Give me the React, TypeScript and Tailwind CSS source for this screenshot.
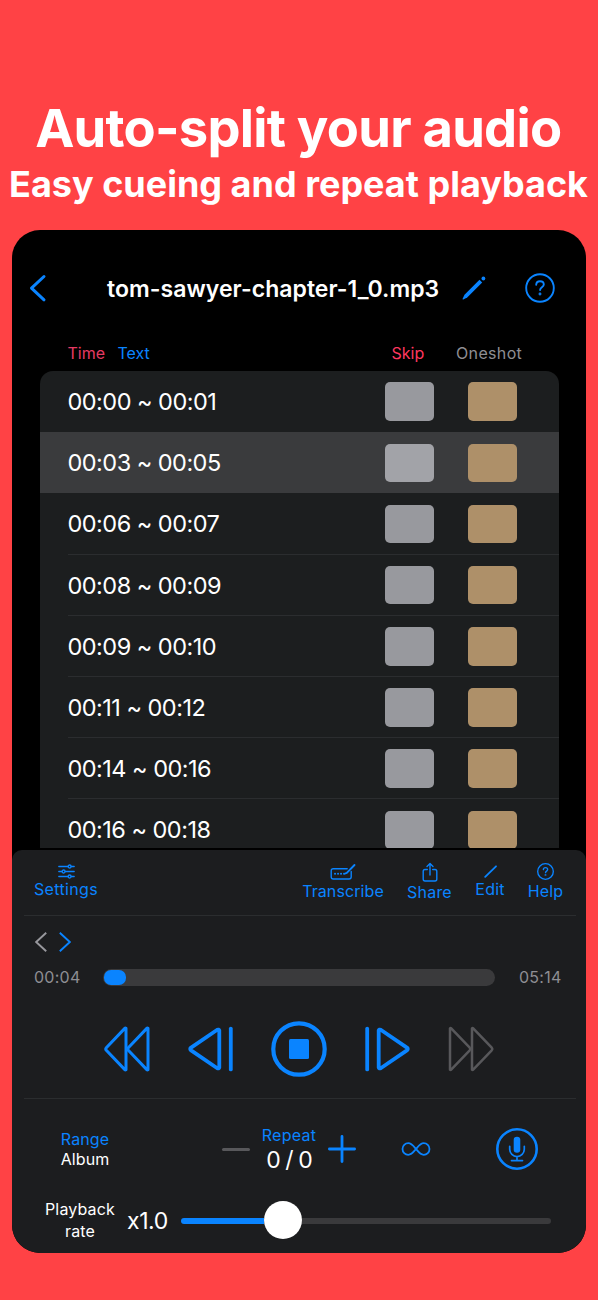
import { ReactNode } from "react";

const segments = [
  "00:00 ~ 00:01",
  "00:03 ~ 00:05",
  "00:06 ~ 00:07",
  "00:08 ~ 00:09",
  "00:09 ~ 00:10",
  "00:11 ~ 00:12",
  "00:14 ~ 00:16",
  "00:16 ~ 00:18",
];

const PencilIcon = ({ className }: { className?: string }) => (
  <svg viewBox="0 0 24 24" className={className} fill="currentColor">
    <path d="M17.500 3.700l2.700 2.700L5.200 21.400 1.300 23.400q-1 .2-.7-.7L2.500 18.700z" />
    <circle cx="21.400" cy="2.500" r="1.900" />
  </svg>
);

const EditIcon = () => (
  <svg
    viewBox="0 0 13 13"
    className="size-[13px]"
    stroke="currentColor"
    strokeWidth="1.800"
    strokeLinecap="round"
  >
    <path d="M1.200 11.900L12 1.300" />
  </svg>
);

const HelpIcon = ({
  className,
  strokeWidth,
}: {
  className?: string;
  strokeWidth: number;
}) => (
  <svg
    viewBox="0 0 30 30"
    className={className}
    fill="none"
    stroke="currentColor"
    strokeWidth={strokeWidth}
    strokeLinecap="round"
    strokeLinejoin="round"
  >
    <circle cx="15" cy="15" r="13.8" />
    <path d="M11.200 11.700c.1-2.200 1.600-3.500 3.800-3.500 2.200 0 3.800 1.300 3.800 3.300 0 2.700-3.700 2.900-3.700 5.500" />
    <circle cx="15" cy="21" r=".5" fill="currentColor" />
  </svg>
);

const SlidersIcon = () => (
  <svg
    viewBox="0 0 17 15"
    className="h-[15px] w-[17px]"
    fill="none"
    stroke="currentColor"
    strokeWidth="1.300"
    strokeLinecap="round"
  >
    <path d="M.8 2.500h9.200M13.200 2.500h3M.8 7.500h3.200M7.200 7.500h9M.8 12.500h9.200M13.200 12.500h3" />
    <circle cx="11.600" cy="2.500" r="1.500" />
    <circle cx="5.600" cy="7.500" r="1.500" />
    <circle cx="11.600" cy="12.500" r="1.500" />
  </svg>
);

const TranscribeIcon = () => (
  <svg
    viewBox="0 0 26 18"
    className="h-[18px] w-[26px]"
    fill="none"
    stroke="currentColor"
    strokeWidth="1.400"
    strokeLinecap="round"
    strokeLinejoin="round"
  >
    <path d="M17.200 5.700H3.200Q1.200 5.700 1.200 7.700v6Q1.200 16 3.200 16H19Q21.200 16 21.200 13.700V8.500" />
    <path d="M24.500 2l-7.700 7.800-1.600.7" strokeWidth="1.900" />
    <path
      d="M5 10.800h.1M8 10.800h.1M11 10.800h.1M14 10.800h.1"
      strokeWidth="1.900"
    />
  </svg>
);

const ShareIcon = () => (
  <svg
    viewBox="0 0 16 20"
    className="h-5 w-4"
    fill="none"
    stroke="currentColor"
    strokeWidth="1.400"
    strokeLinecap="round"
    strokeLinejoin="round"
  >
    <path d="M5.300 7.500H3Q1.200 7.500 1.200 9.300v7.700Q1.200 19 3 19h10Q14.800 19 14.800 17V9.300Q14.800 7.500 13 7.500h-2.300" />
    <path d="M8 13V1.700M5 4.500l3-3 3 3" />
  </svg>
);

const SkipAllIcon = ({ className }: { className?: string }) => (
  <svg
    viewBox="0 0 46 46"
    className={className}
    fill="none"
    stroke="currentColor"
    strokeLinejoin="round"
  >
    <path d="M22 2.300v41.400q-.7.4-1.200-.1L2.300 24.300Q1.200 23 2.300 21.700L20.800 2.400q.5-.5 1.200-.1z" />
    <path d="M44 2.300v41.400q-.7.4-1.200-.1L24.300 24.300Q23.200 23 24.300 21.700L42.800 2.400q.5-.5 1.200-.1z" />
  </svg>
);

const StepIcon = ({ className }: { className?: string }) => (
  <svg
    viewBox="0 0 46 46"
    className={className}
    fill="none"
    stroke="currentColor"
    strokeWidth="3.800"
    strokeLinecap="round"
    strokeLinejoin="round"
  >
    <path d="M31.300 4.500v37q-.5 1.400-2 .7L3.100 24.400Q1.300 23 3.100 21.600L29.300 3.800q1.500-.7 2 .7z" />
    <path d="M42.800 2.600v40.800" />
  </svg>
);

const InfinityIcon = () => (
  <svg
    viewBox="0 0 30 16"
    className="h-4 w-[30px]"
    fill="none"
    stroke="currentColor"
    strokeWidth="1.800"
  >
    <path d="M15 8C12.500 5 10.600 2.200 7.300 2.200A5.800 5.800 0 0 0 7.300 13.800C10.600 13.800 12.500 11 15 8S19.400 2.200 22.700 2.200A5.800 5.800 0 0 1 22.700 13.800C19.400 13.800 17.500 11 15 8z" />
  </svg>
);

const MicIcon = () => (
  <svg
    viewBox="0 0 42 42"
    className="size-[42px]"
    fill="none"
    stroke="currentColor"
    strokeWidth="1.700"
    strokeLinecap="round"
  >
    <circle cx="21" cy="21" r="19.700" strokeWidth="2.600" />
    <rect
      x="17.700"
      y="8.800"
      width="6.600"
      height="16"
      rx="3.300"
      fill="currentColor"
      stroke="none"
    />
    <path d="M13.700 18.300v3a7.300 7.300 0 0 0 14.600 0v-3M21 28.600v3.800M15.500 32.600h11" />
  </svg>
);

const ToolButton = ({
  icon,
  label,
  className,
}: {
  icon: ReactNode;
  label: string;
  className: string;
}) => (
  <button
    className={`flex flex-col items-center whitespace-nowrap text-base leading-4 ${className}`}
  >
    {icon}
    <span>{label}</span>
  </button>
);

export default function App() {
  return (
    <div className="h-[1300px] w-[598px] overflow-hidden bg-[#ff4245] px-3 font-['Inter',sans-serif] text-white">
      <div className="flex h-[230px] flex-col items-center pt-[98px] font-bold whitespace-nowrap">
        <h1 className="pr-[1.5px] text-[52.5px] leading-[60px] tracking-[-0.75px]">
          Auto-split your audio
        </h1>
        <h2 className="mt-1 pr-px text-[36px] leading-[44px]">
          Easy cueing and repeat playback
        </h2>
      </div>

      <div className="flex h-[1023px] flex-col overflow-hidden rounded-[28px] bg-black">
        {/* Navigation bar */}
        <div className="flex h-[116px] shrink-0 items-center pl-[17px] text-[#0a84ff]">
          <svg
            viewBox="0 0 18 28"
            className="h-7 w-[18px]"
            fill="none"
            stroke="currentColor"
            strokeWidth="3"
            strokeLinecap="round"
            strokeLinejoin="round"
          >
            <path d="M15 2.500L2.500 14.200 15 25.800" />
          </svg>
          <span className="ml-[60px] w-[335px] pt-[2px] text-[23px] leading-7 font-semibold tracking-[0.05px] whitespace-nowrap text-white">
            tom-sawyer-chapter-1_0.mp3
          </span>
          <PencilIcon className="ml-5 size-6" />
          <HelpIcon className="ml-[39px] size-[30px]" strokeWidth={1.9} />
        </div>

        {/* Column titles */}
        <div className="flex h-[25px] shrink-0 pl-[55.5px] text-base leading-[14px] whitespace-nowrap">
          <span className="w-[50px] text-[#e63a63]">Time</span>
          <span className="w-[274px] text-[#0a84ff]">Text</span>
          <span className="w-[64.5px] text-[#ff375f]">Skip</span>
          <span className="tracking-[0.35px] text-[#8e8e93]">Oneshot</span>
        </div>

        <div className="mx-auto h-[476.5px] w-[519px] shrink-0 overflow-hidden rounded-t-[13px] bg-[#1c1e1f]">
          {segments.map((segment, i) => (
            <div
              key={segment}
              className={`flex h-[61.2px] items-stretch pl-7 ${
                i === 1 ? "bg-[#3a3b3d]" : ""
              }`}
            >
              <div
                className={`flex flex-1 items-center border-b pt-px ${
                  i < 2 ? "border-transparent" : "border-[#2b2d2f]"
                }`}
              >
                <span className="w-[317.5px] pt-[1px] text-[23.5px] leading-7 tracking-[-0.53px] whitespace-nowrap">
                  {segment}
                </span>
                <span
                  className={`h-[38.5px] w-[49px] rounded-[5px] ${
                    i === 1 ? "bg-[#a2a3a8]" : "bg-[#98999e]"
                  }`}
                />
                <span className="ml-[34px] h-[38.5px] w-[49px] rounded-[5px] bg-[#ae9069]" />
              </div>
            </div>
          ))}
        </div>

        {/* Player panel */}
        <div className="mt-[2.500px] flex flex-1 flex-col rounded-t-[10px] bg-[#1c1d1f]">
          <div className="mr-[10px] ml-3 flex h-[66px] shrink-0 items-start border-b border-[#2b2d2f] text-[#0a84ff]">
            <ToolButton
              className="mt-[14px] ml-[9px] w-[66px] gap-[2px] tracking-[0.35px]"
              icon={<SlidersIcon />}
              label="Settings"
            />
            <ToolButton
              className="mt-[13px] ml-[202px] w-[84px] gap-[1.5px] tracking-[0.1px]"
              icon={<TranscribeIcon />}
              label="Transcribe"
            />
            <ToolButton
              className="mt-3 ml-5 w-[49px] gap-[1.5px] tracking-[0.2px]"
              icon={<ShareIcon />}
              label="Share"
            />
            <ToolButton
              className="mt-[15px] ml-5 w-[32px] gap-[3px] tracking-[0.2px]"
              icon={<EditIcon />}
              label="Edit"
            />
            <ToolButton
              className="mt-[13px] ml-5 w-[39px] gap-[3px] tracking-[0.2px]"
              icon={<HelpIcon className="size-[17px]" strokeWidth={2.4} />}
              label="Help"
            />
          </div>

          <div className="mt-4 flex h-5 gap-3 pl-[23px]">
            <svg
              viewBox="0 0 12 20"
              className="h-5 w-3 text-[#98989d]"
              fill="none"
              stroke="currentColor"
              strokeWidth="1.900"
            >
              <path d="M11.200.8L1.200 10l10 9.200" />
            </svg>
            <svg
              viewBox="0 0 12 20"
              className="h-5 w-3 text-[#0a84ff]"
              fill="none"
              stroke="currentColor"
              strokeWidth="1.900"
            >
              <path d="M.8.8l10 9.200-10 9.200" />
            </svg>
          </div>

          <div className="mt-[17px] flex h-[17px] items-center pl-[22px] text-base leading-4 tracking-[0.25px] text-[#8e8e93]">
            <span className="w-[69px] pb-px">00:04</span>
            <div className="flex h-[17px] w-[392px] items-center rounded-full bg-[#3a3a3c] pl-px">
              <div className="h-[15px] w-[21.5px] rounded-[7px] bg-[#0a84ff]" />
            </div>
            <span className="ml-6 pb-px">05:14</span>
          </div>

          {/* Transport */}
          <div className="mr-[10px] ml-3 mt-[17px] flex h-[96px] shrink-0 items-center border-b border-[#2b2d2f] pb-1 pl-[80px] text-[#0a84ff]">
            <SkipAllIcon className="size-[46px] stroke-3" />
            <StepIcon className="ml-[37.5px] size-[46px]" />
            <svg
              viewBox="0 0 56 56"
              className="ml-[37.5px] size-14"
              fill="none"
            >
              <circle
                cx="28"
                cy="28"
                r="25.700"
                stroke="currentColor"
                strokeWidth="4.200"
              />
              <rect
                x="18"
                y="18"
                width="20"
                height="20"
                rx="1.500"
                fill="currentColor"
              />
            </svg>
            <StepIcon className="ml-[37px] size-[46px] -scale-x-100" />
            <SkipAllIcon className="ml-[38px] size-[46px] -scale-x-100 stroke-[2.5px] text-[#58585b]" />
          </div>

          {/* Range, repeat and recording */}
          <div className="flex h-[99px] shrink-0 items-center pt-px pl-[34px] text-[#0a84ff]">
            <div className="flex w-[78px] flex-col items-center text-base leading-5 tracking-[0.1px]">
              <span>Range</span>
              <span className="text-white">Album</span>
            </div>
            <div className="ml-[98px] h-[3px] w-7 rounded-full bg-[#58585b]" />
            <div className="ml-[9px] flex w-[60px] flex-col items-center whitespace-nowrap">
              <span className="text-base leading-5 tracking-[0.25px]">
                Repeat
              </span>
              <span className="pt-px text-[23px] leading-7 tracking-[-0.9px] text-white">
                0 / 0
              </span>
            </div>
            <svg
              viewBox="0 0 28 28"
              className="ml-[9px] size-7"
              stroke="currentColor"
              strokeWidth="2.800"
              strokeLinecap="round"
            >
              <path d="M1.400 14h25.200M14 1.400v25.200" />
            </svg>
            <span className="ml-[45px]">
              <InfinityIcon />
            </span>
            <span className="ml-[65px]">
              <MicIcon />
            </span>
          </div>

          {/* Playback rate */}
          <div className="flex h-11 items-center pl-[30px]">
            <div className="w-[76px] text-center text-base leading-[22px] tracking-[0.15px]">
              Playback rate
            </div>
            <span className="ml-[9px] w-[54px] pt-[2px] text-[23px] leading-7 tracking-[-0.4px] whitespace-nowrap">
              x1.0
            </span>
            <div className="flex items-center">
              <div className="mt-[2px] h-[6px] w-[83px] rounded-l-full bg-[#0a84ff]" />
              <div className="size-[38px] rounded-full bg-white" />
              <div className="mt-[2px] h-[6px] w-[249px] rounded-r-full bg-[#3a3a3c]" />
            </div>
          </div>
        </div>
      </div>
    </div>
  );
}
